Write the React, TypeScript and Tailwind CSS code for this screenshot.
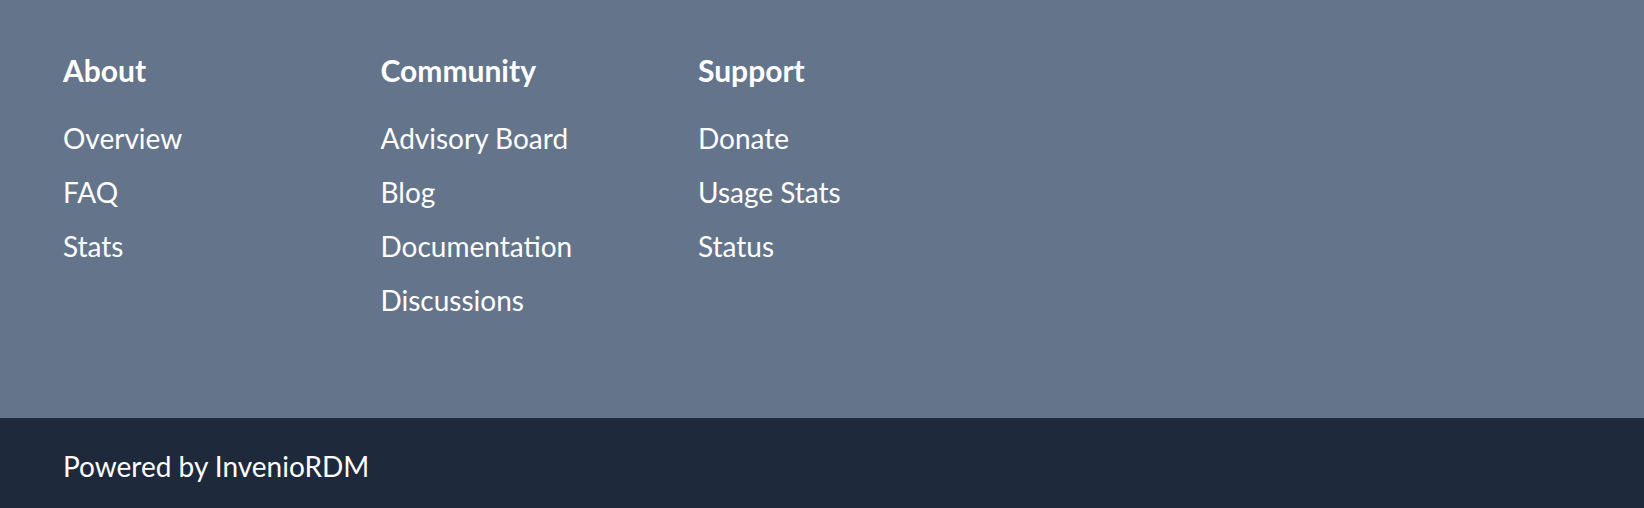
export default function App() {
  const cols = [
    { title: "About", links: ["Overview", "FAQ", "Stats"] },
    { title: "Community", links: ["Advisory Board", "Blog", "Documentation", "Discussions"] },
    { title: "Support", links: ["Donate", "Usage Stats", "Status"] },
  ];
  return (
    <div className="w-[1644px] h-[508px] flex flex-col text-white" style={{ fontFamily: "Lato, 'Open Sans', sans-serif" }}>
      <div className="h-[418px] bg-[#64748b] pl-[63px] pt-[52px] flex">
        {cols.map((c) => (
          <div key={c.title} className="w-[317.5px] flex flex-col">
            <h3 className="text-[30px] font-bold leading-[36px]">{c.title}</h3>
            <ul className="mt-[23px] flex flex-col">
              {c.links.map((l) => (
                <li key={l} className="text-[28px] leading-[54px]">{l}</li>
              ))}
            </ul>
          </div>
        ))}
      </div>
      <div className="h-[90px] bg-[#1e293b] pl-[63px] pt-[6px] flex items-center">
        <span className="text-[28px]">Powered by InvenioRDM</span>
      </div>
    </div>
  );
}
